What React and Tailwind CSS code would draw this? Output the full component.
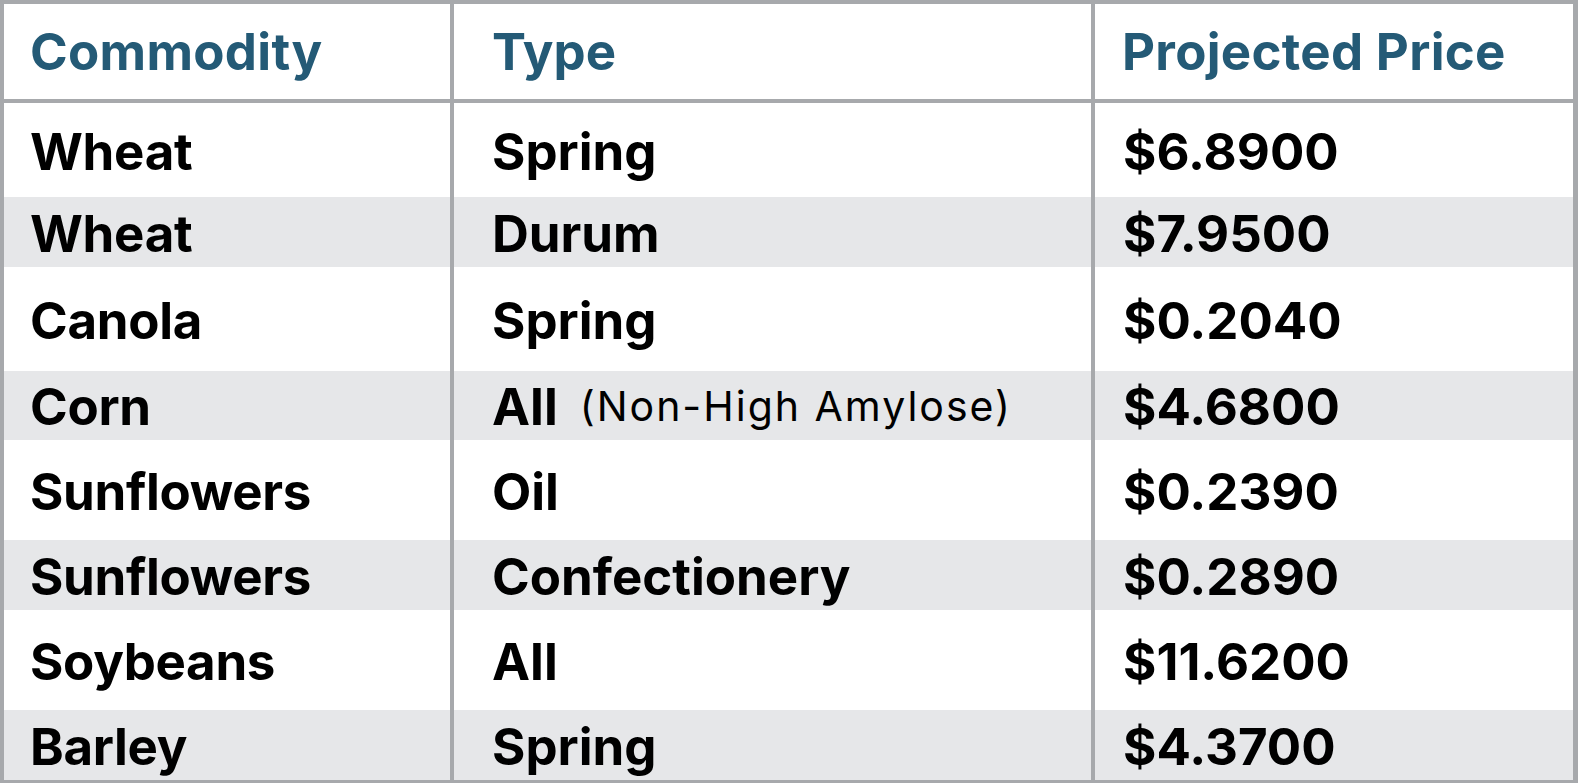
import React from 'react';

const rows = [
  { name: 'Wheat', type: 'Spring', price: '$6.8900', h: 'h-[94px]', gray: false },
  { name: 'Wheat', type: 'Durum', price: '$7.9500', h: 'h-[70px]', gray: true },
  { name: 'Canola', type: 'Spring', price: '$0.2040', h: 'h-[104px]', gray: false },
  { name: 'Corn', type: 'All', note: '(Non-High Amylose)', price: '$4.6800', h: 'h-[69px]', gray: true },
  { name: 'Sunflowers', type: 'Oil', price: '$0.2390', h: 'h-[100px]', gray: false },
  { name: 'Sunflowers', type: 'Confectionery', price: '$0.2890', h: 'h-[70px]', gray: true },
  { name: 'Soybeans', type: 'All', price: '$11.6200', h: 'h-[100px]', gray: false },
  { name: 'Barley', type: 'Spring', price: '$4.3700', h: 'h-[70px]', gray: true },
];

export default function App() {
  return (
    <div
      className="w-[1578px] h-[783px] bg-white border-t-4 border-l-4 border-r-[5px] border-b-[3px] border-[#a7a9ac] text-black"
      style={{ fontFamily: 'Inter, "Open Sans", sans-serif' }}
    >
      <div className="grid grid-cols-[446px_641px_1fr] h-[99px] border-b-4 border-[#a7a9ac] text-[#245a76] text-[51px] leading-none font-bold">
        <div className="flex items-center pl-[26px] tracking-[0.3px]">Commodity</div>
        <div className="flex items-center pl-[38px] border-l-4 border-[#a7a9ac]">Type</div>
        <div className="flex items-center pl-[27px] border-l-4 border-[#a7a9ac] tracking-[0.3px]">Projected Price</div>
      </div>

      {rows.map((r, i) => (
        <div
          key={i}
          className={`grid grid-cols-[446px_641px_1fr] ${r.h} text-[51px] leading-none font-bold ${r.gray ? 'bg-[#e6e7e9]' : 'bg-white'}`}
        >
          <div className="flex items-center pl-[26px] pt-[2px] tracking-[-0.3px]">{r.name}</div>
          <div className="flex items-center pl-[38px] pt-[2px] border-l-4 border-[#a7a9ac]">
            {r.type}
            {r.note && <span className="ml-[22px] text-[41px] font-normal tracking-[2px]">{r.note}</span>}
          </div>
          <div className="flex items-center pl-[28px] pt-[2px] border-l-4 border-[#a7a9ac]">{r.price}</div>
        </div>
      ))}
    </div>
  );
}
